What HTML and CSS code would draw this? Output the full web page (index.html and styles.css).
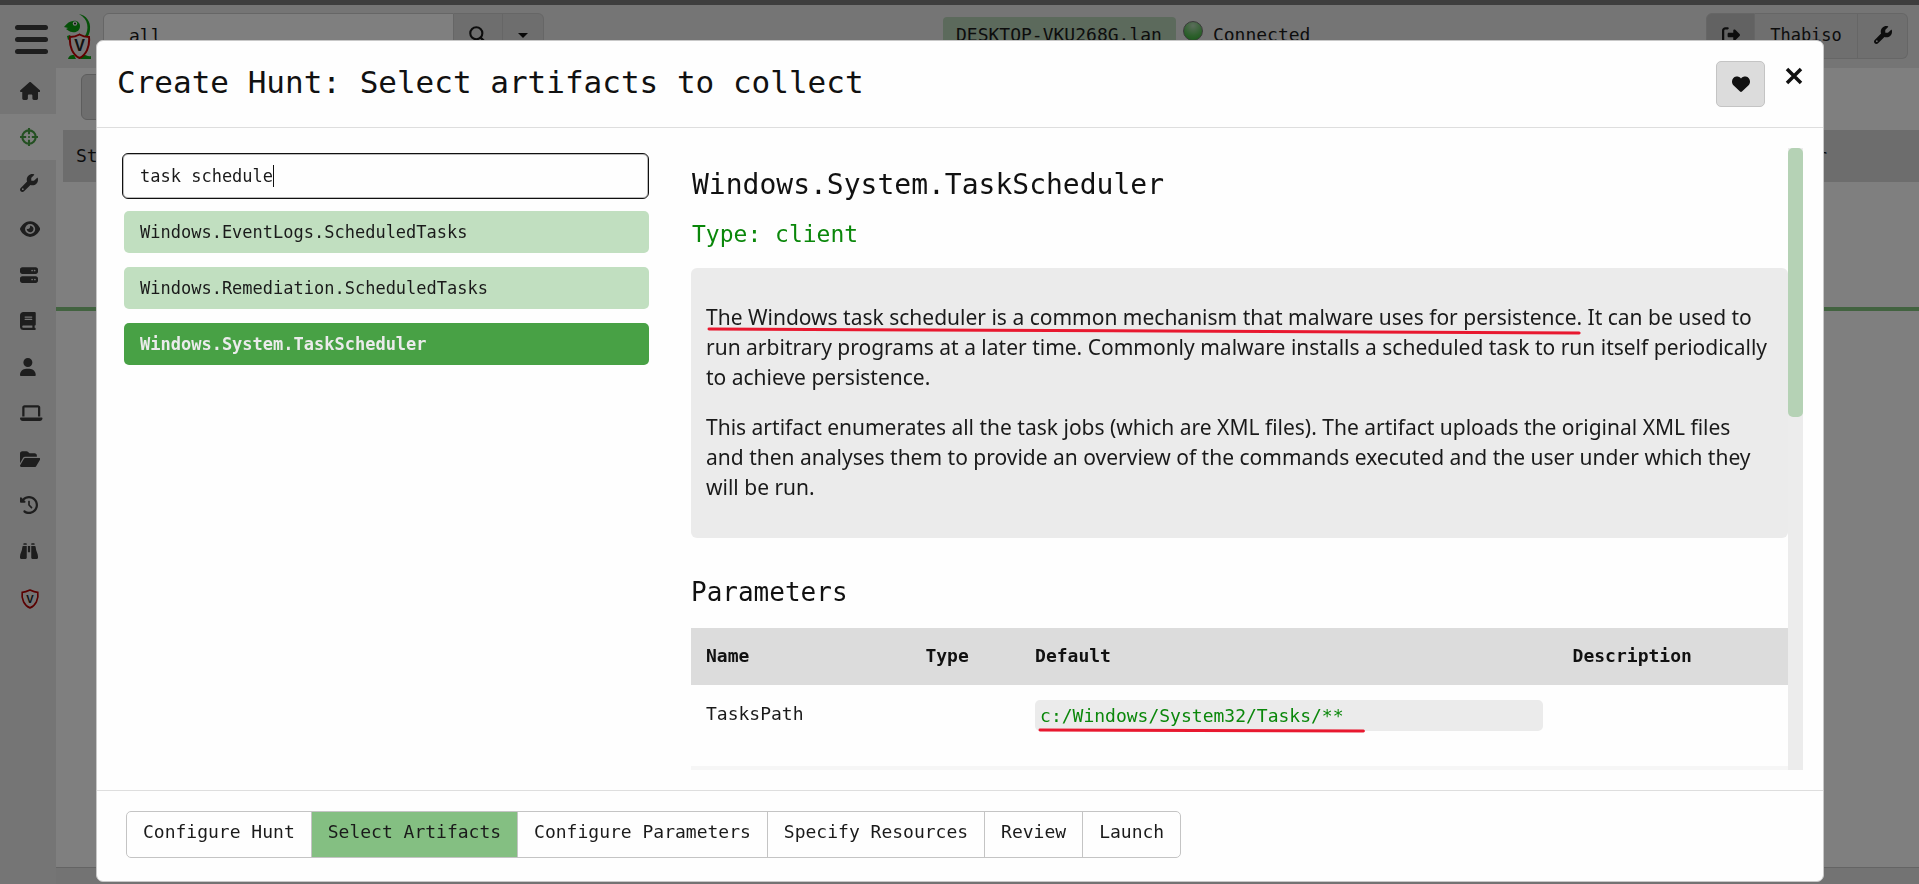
FILE: index.html
```html
<!DOCTYPE html>
<html lang="en">
<head>
<meta charset="utf-8">
<meta name="viewport" content="width=device-width, initial-scale=1">
<title>Create Hunt</title>
<link rel="stylesheet" href="styles.css">
</head>
<body>
<div class="app">
  <header class="topbar">
    <button class="menu-button" type="button" aria-label="Menu"><span></span><span></span><span></span></button>
    <svg class="logo" viewBox="0 0 28 46" aria-hidden="true">
      <path d="M15 1C22 2 27 9 26 16C26 20 24 24 22 25L21 23C25 17 25 6 15 1Z" fill="#0aa010"/>
      <path d="M0 14C3 10 6 8 9 8C12 7 16 9 16 13C16 18 12 20 8 19C6 19 4 17 2 16L4 15Z" fill="#0aa010"/>
      <path d="M3 23L6 22L8 25L4 27Z" fill="#0aa010"/>
      <path d="M4 46C5 42 8 42 10 42L12 46ZM16 46L18 42C22 41 23 44 27 43L27 46Z" fill="#0aa010"/>
      <circle cx="11" cy="10.500" r="2.200" fill="#fff"/><circle cx="11" cy="10.500" r="1" fill="#111"/>
      <path d="M15.500 21.500C18 23 21 24 25 24C26 34 22 42 15.500 45C9 42 5 34 6 24C10 24 13 23 15.500 21.500Z" fill="#ececec" stroke="#c00000" stroke-width="2"/>
      <text x="15.500" y="38" text-anchor="middle" class="logo-letter">V</text>
    </svg>
    <div class="search">
      <input type="text" value="all" aria-label="Search clients">
      <button type="button" aria-label="Search"><svg class="icon" viewBox="0 0 512 512"><circle cx="208" cy="208" r="172" fill="none" stroke="currentColor" stroke-width="60"/><path d="M330 330L480 480" stroke="currentColor" stroke-width="64" stroke-linecap="round"/></svg></button>
      <button class="narrow" type="button" aria-label="Search options"><span class="caret-down"></span></button>
    </div>
    <div class="client"><span class="client-name">DESKTOP-VKU268G.lan</span><span class="status-dot"></span><span>Connected</span></div>
    <div class="user">
      <button class="logout" type="button" aria-label="Log out"><svg class="icon" viewBox="0 0 512 512"><path d="M377.900 105.900L500.700 228.700c7.200 7.200 11.300 17.100 11.300 27.300s-4.100 20.100-11.300 27.300L377.900 406.100c-6.400 6.400-15 9.900-24 9.900c-18.700 0-33.900-15.200-33.900-33.900l0-62.100-128 0c-17.700 0-32-14.300-32-32l0-64c0-17.700 14.300-32 32-32l128 0 0-62.100c0-18.700 15.200-33.900 33.900-33.900c9 0 17.600 3.600 24 9.900zM160 96L96 96c-17.700 0-32 14.300-32 32l0 256c0 17.700 14.300 32 32 32l64 0c17.700 0 32 14.300 32 32s-14.300 32-32 32l-64 0c-53 0-96-43-96-96L0 128C0 75 43 32 96 32l64 0c17.700 0 32 14.300 32 32s-14.300 32-32 32z"/></svg></button>
      <button type="button">Thabiso</button>
      <button type="button" aria-label="Settings"><svg class="icon" viewBox="0 0 512 512"><use href="#wrench"/></svg></button>
    </div>
  </header>
  <div class="workspace">
    <nav class="sidebar" aria-label="Main">
      <a href="#" aria-label="Home"><svg class="icon" viewBox="0 0 576 512"><path d="M575.800 255.500c0 18-15 32.100-32 32.100h-32l.7 160.200c0 2.700-.2 5.400-.5 8.100V472c0 22.100-17.900 40-40 40H392c-22.100 0-40-17.900-40-40V384c0-17.700-14.300-32-32-32H256c-17.700 0-32 14.300-32 32v88c0 22.100-17.900 40-40 40H104c-22.100 0-40-17.900-40-40V287.600H32c-18 0-32-14-32-32.100c0-9 3-17 10-24L266.400 8c7-7 15-8 22-8s15 2 21 7L564.800 231.500c8 7 12 15 11 24z"/></svg></a>
      <a href="#" class="active" aria-label="Hunts"><svg class="icon" viewBox="0 0 512 512"><circle cx="256" cy="256" r="190" fill="none" stroke="currentColor" stroke-width="60"/><path d="M256 0V176M256 336V512M0 256H176M336 256H512" stroke="currentColor" stroke-width="60"/><circle cx="256" cy="256" r="30"/></svg></a>
      <a href="#" aria-label="Artifacts"><svg class="icon" viewBox="0 0 512 512"><path id="wrench" d="M352 320c88.400 0 160-71.600 160-160c0-15.300-2.200-30.100-6.200-44.200c-3.100-10.800-16.400-13.200-24.300-5.300l-76.800 76.800c-3 3-7.100 4.700-11.300 4.700H336c-8.800 0-16-7.200-16-16V118.600c0-4.200 1.700-8.300 4.700-11.300l76.800-76.800c7.900-7.900 5.400-21.200-5.300-24.300C382.100 2.200 367.300 0 352 0C263.600 0 192 71.600 192 160c0 19.100 3.400 37.500 9.500 54.500L19.900 396.100C7.200 408.800 0 426.100 0 444.100C0 481.600 30.400 512 67.900 512c18 0 35.300-7.200 48-19.900L297.500 310.500c17 6.200 35.400 9.500 54.500 9.500zM80 408a24 24 0 1 1 0 48 24 24 0 1 1 0-48z"/></svg></a>
      <a href="#" aria-label="Events"><svg class="icon" viewBox="0 0 576 512"><path d="M288 32c-80.800 0-145.500 36.800-192.600 80.600C48.600 156 17.300 208 2.500 243.700c-3.300 7.900-3.300 16.700 0 24.600C17.300 304 48.600 356 95.400 399.400C142.500 443.200 207.200 480 288 480s145.500-36.800 192.600-80.600c46.800-43.500 78.100-95.400 93-131.100c3.300-7.900 3.300-16.700 0-24.600c-14.900-35.700-46.200-87.700-93-131.100C433.500 68.800 368.800 32 288 32zM144 256a144 144 0 1 1 288 0 144 144 0 1 1 -288 0zm144-64c0 35.300-28.700 64-64 64c-7.100 0-13.900-1.200-20.300-3.300c-5.500-1.800-11.900 1.600-11.700 7.400c.3 6.900 1.300 13.800 3.200 20.700c13.700 51.200 66.400 81.600 117.600 67.900s81.600-66.400 67.900-117.600c-11.100-41.500-47.800-69.400-88.600-71.100c-5.800-.2-9.200 6.100-7.400 11.700c2.100 6.400 3.300 13.200 3.300 20.300z"/></svg></a>
      <a href="#" aria-label="Server"><svg class="icon" viewBox="0 0 512 512"><path d="M64 32C28.700 32 0 60.700 0 96v64c0 35.300 28.700 64 64 64H448c35.300 0 64-28.700 64-64V96c0-35.300-28.700-64-64-64H64zm280 72a24 24 0 1 1 0 48 24 24 0 1 1 0-48zm48 24a24 24 0 1 1 48 0 24 24 0 1 1 -48 0zM64 288c-35.300 0-64 28.700-64 64v64c0 35.300 28.700 64 64 64H448c35.300 0 64-28.700 64-64V352c0-35.300-28.700-64-64-64H64zm280 72a24 24 0 1 1 0 48 24 24 0 1 1 0-48zm56 24a24 24 0 1 1 48 0 24 24 0 1 1 -48 0z"/></svg></a>
      <a href="#" aria-label="Notebooks"><svg class="icon" viewBox="0 0 448 512"><path d="M96 0C43 0 0 43 0 96V416c0 53 43 96 96 96H416c17.700 0 32-14.300 32-32s-14.300-32-32-32V384c17.700 0 32-14.300 32-32V32c0-17.700-14.300-32-32-32H96zm0 384H352v64H96c-17.700 0-32-14.300-32-32s14.300-32 32-32zm32-240c0-8.800 7.200-16 16-16H336c8.800 0 16 7.200 16 16s-7.200 16-16 16H144c-8.800 0-16-7.200-16-16zm16 48H336c8.800 0 16 7.200 16 16s-7.200 16-16 16H144c-8.800 0-16-7.200-16-16s7.200-16 16-16z"/></svg></a>
      <a href="#" aria-label="Users"><svg class="icon" viewBox="0 0 448 512"><path d="M224 256A128 128 0 1 0 224 0a128 128 0 1 0 0 256zm-45.700 48C79.800 304 0 383.800 0 482.300C0 498.700 13.300 512 29.700 512H418.300c16.400 0 29.700-13.300 29.700-29.700C448 383.800 368.200 304 269.700 304H178.300z"/></svg></a>
      <a href="#" aria-label="Host"><svg class="icon" viewBox="0 0 640 512"><path d="M128 32C92.700 32 64 60.700 64 96V352h64V96H512V352h64V96c0-35.300-28.700-64-64-64H128zM19.200 384C8.600 384 0 392.600 0 403.200C0 445.600 34.400 480 76.800 480H563.200c42.400 0 76.800-34.400 76.800-76.800c0-10.600-8.600-19.200-19.200-19.200H19.200z"/></svg></a>
      <a href="#" aria-label="Files"><svg class="icon" viewBox="0 0 576 512"><path d="M88.700 223.800L0 375.800V96C0 60.700 28.700 32 64 32H181.500c17 0 33.300 6.700 45.300 18.700l26.500 26.500c12 12 28.300 18.700 45.300 18.700H416c35.300 0 64 28.700 64 64v32H144c-22.800 0-43.800 12.100-55.300 31.800zm27.600 16.100C122.100 230 132.600 224 144 224H544c11.500 0 22 6.100 27.700 16.100s5.700 22.200-.1 32.100l-112 192C453.900 474 443.400 480 432 480H32c-11.500 0-22-6.100-27.700-16.100s-5.700-22.200 .1-32.100l112-192z"/></svg></a>
      <a href="#" aria-label="History"><svg class="icon" viewBox="0 0 512 512"><path d="M75 75L41 41C25.900 25.900 0 36.600 0 57.900V168c0 13.300 10.700 24 24 24H134.100c21.400 0 32.100-25.900 17-41l-30.800-30.800C155 85.500 203 64 256 64c106 0 192 86 192 192s-86 192-192 192c-40.800 0-78.600-12.700-109.700-34.400c-14.500-10.100-34.400-6.600-44.600 7.900s-6.600 34.400 7.900 44.600C151.200 495 201.700 512 256 512c141.400 0 256-114.600 256-256S397.400 0 256 0C185.300 0 121.300 28.700 75 75zm181 53c-13.300 0-24 10.700-24 24V256c0 6.400 2.500 12.500 7 17l72 72c9.400 9.400 24.600 9.400 33.900 0s9.400-24.600 0-33.900l-65-65V152c0-13.300-10.700-24-24-24z"/></svg></a>
      <a href="#" aria-label="Client events"><svg class="icon" viewBox="0 0 512 512"><path d="M112 32h64c9 0 16 7 16 16v32H96V48c0-9 7-16 16-16zM336 32h64c9 0 16 7 16 16v32h-96V48c0-9 7-16 16-16zM90 112H192V448c0 18-14 32-32 32H32c-18 0-32-14-32-32V410C0 330 60 260 66 150C67 128 76 112 90 112zM320 112H422C436 112 445 128 446 150C452 260 512 330 512 410V448c0 18-14 32-32 32H352c-18 0-32-14-32-32zM224 112h64v176h-64z"/></svg></a>
      <a href="#" class="about" aria-label="Velociraptor"><svg class="icon" viewBox="0 0 18 18"><path d="M9 1C11 2 13 3 16 3C17 9 14 15 9 17C4 15 1 9 2 3C5 3 7 2 9 1Z" fill="none" stroke="#b40000" stroke-width="1.500"/><text x="9" y="12.500" text-anchor="middle" class="badge-letter">V</text></svg></a>
    </nav>
    <main class="hunts">
      <div class="toolbar"><button type="button" aria-label="New hunt"></button></div>
      <div class="hunt-columns"><span>State</span><span>Creator</span></div>
      <div class="hunt-rows"></div>
      <div class="splitter"></div>
      <div class="hunt-detail"></div>
      <div class="statusbar"></div>
    </main>
  </div>
</div>

<div class="backdrop">
  <section class="modal" role="dialog" aria-labelledby="dialog-title">
    <header class="modal-header">
      <h1 id="dialog-title">Create Hunt: Select artifacts to collect</h1>
      <button class="favorite" type="button" aria-label="Favorites"><svg class="icon" viewBox="0 0 512 512"><path d="M47.600 300.400L228.300 469.100c7.500 7 17.400 10.900 27.700 10.900s20.200-3.900 27.700-10.900L464.400 300.400c30.400-28.300 47.600-68 47.600-109.500v-5.800c0-69.900-50.500-129.500-119.400-141C347 36.500 300.600 51.400 268 84L256 96 244 84c-32.600-32.600-79-47.500-124.600-39.900C50.500 55.600 0 115.200 0 185.100v5.800c0 41.500 17.200 81.200 47.600 109.500z"/></svg></button>
      <button class="close" type="button" aria-label="Close"><svg viewBox="0 0 16 16"><path d="M1 1L15 15M15 1L1 15" stroke="#111" stroke-width="3.500"/></svg></button>
    </header>
    <div class="modal-body">
      <div class="picker">
        <div class="filter"><input type="text" value="task schedule" aria-label="Search for artifacts"><span class="text-caret"></span></div>
        <div class="results">
          <button type="button">Windows.EventLogs.ScheduledTasks</button>
          <button type="button">Windows.Remediation.ScheduledTasks</button>
          <button type="button" class="selected">Windows.System.TaskScheduler</button>
        </div>
      </div>
      <div class="detail">
        <article class="artifact">
          <h2>Windows.System.TaskScheduler</h2>
          <h3 class="type">Type: client</h3>
          <div class="description">
            <p><span class="marked">The Windows task scheduler is a common mechanism that malware uses for persistence.<svg class="marker" viewBox="0 0 870 8" preserveAspectRatio="none"><path d="M3 2L867 6" /></svg></span> It can be used to run arbitrary programs at a later time. Commonly malware installs a scheduled task to run itself periodically to achieve persistence.</p>
            <p>This artifact enumerates all the task jobs (which are XML files). The artifact uploads the original XML files and then analyses them to provide an overview of the commands executed and the user under which they will be run.</p>
          </div>
          <h3 class="section">Parameters</h3>
          <table>
            <thead><tr><th class="c-name">Name</th><th class="c-type">Type</th><th class="c-default">Default</th><th class="c-desc">Description</th></tr></thead>
            <tbody>
              <tr><td>TasksPath</td><td></td><td><code><span class="marked">c:/Windows/System32/Tasks/**<svg class="marker" viewBox="0 0 326 6" preserveAspectRatio="none"><path d="M0 3L326 4"/></svg></span></code></td><td></td></tr>
              <tr class="striped"><td></td><td></td><td></td><td></td></tr>
            </tbody>
          </table>
        </article>
        <div class="scroll-track"><div class="scroll-thumb"></div></div>
      </div>
    </div>
    <footer class="modal-footer">
      <div class="steps">
        <button type="button">Configure Hunt</button>
        <button type="button" class="current">Select Artifacts</button>
        <button type="button">Configure Parameters</button>
        <button type="button">Specify Resources</button>
        <button type="button">Review</button>
        <button type="button">Launch</button>
      </div>
    </footer>
  </section>
</div>
</body>
</html>
```

FILE: styles.css
```css
* { box-sizing: border-box; }
body {
  margin: 0;
  color: #1a1a1a;
  background: #fff;
  font: 18px/27px "DejaVu Sans Mono", "Liberation Mono", monospace;
}
button, input { font: inherit; color: inherit; margin: 0; }
button { padding: 0; border: 0; background: none; }
h1, h2, h3, p { margin: 0; font-weight: normal; }
.icon { display: block; height: 18px; width: auto; fill: currentColor; }

/* Page behind the dialog */
.app { display: flex; flex-direction: column; height: 100vh; overflow: hidden; }
.topbar {
  display: flex;
  align-items: flex-start;
  height: 68px;
  padding: 8px 11px 0 15px;
  border-top: 5px solid #7c7c7c;
  background: #ebebeb;
}
.menu-button { display: flex; flex-direction: column; gap: 7px; width: 33px; margin: 12px 16px 0 0; }
.menu-button span { height: 5px; border-radius: 3px; background: #3c3c3c; }
.logo { width: 28px; height: 46px; margin-right: 11px; }
.logo-letter { font: bold 16px "Liberation Sans", sans-serif; fill: #222; }
.search, .user { display: flex; height: 46px; }
.search { width: 441px; }
.search input {
  flex: 1;
  min-width: 0;
  padding: 0 25px 2px;
  border: 1px solid #ccc;
  border-radius: 6px 0 0 6px;
  background: #fff;
}
.search button, .user button {
  display: flex;
  align-items: center;
  justify-content: center;
  width: 49px;
  padding-bottom: 2px;
  border: 1px solid #ccc;
  border-left: 0;
  background: #dcdcdc;
}
.search .narrow { width: 41px; border-radius: 0 6px 6px 0; }
.caret-down { border: 5px solid transparent; border-top-color: #111; border-bottom: 0; }
.client { display: flex; align-items: flex-start; margin-left: 399px; line-height: 36px; }
.client-name { margin-top: 4px; padding: 0 14px 0 13px; height: 36px; border-radius: 4px; background: #b9d4b8; }
.status-dot {
  width: 20px;
  height: 20px;
  margin: 8px 10px 0 7px;
  border: 1px solid #777;
  border-radius: 50%;
  background: radial-gradient(circle at 50% 20%, #b8dab8, #5cc05a 60%, #2fae2d);
}
.client span:last-child { margin-top: 4px; }
.user { margin-left: auto; }
.user button { background: #dedede; width: 50px; }
.user button:nth-child(2) { width: 103px; font-size: 17px; }
.user button:last-child { border-radius: 0 6px 6px 0; }
.user .logout { width: 49px; background: #c4c4c4; border-left: 1px solid #ccc; border-radius: 6px 0 0 6px; }
.workspace { display: flex; flex: 1; min-height: 0; }
.sidebar { width: 56px; background: #ebebeb; color: #3c3c3c; }
.sidebar a { display: flex; align-items: center; height: 46px; padding-left: 20px; color: inherit; }
.sidebar .active { background: #fff; color: #48a145; }
.sidebar .about .icon { height: 20px; margin-top: 4px; }
.badge-letter { font: bold 10px "Liberation Sans", sans-serif; fill: #222; }
.hunts { display: flex; flex: 1; flex-direction: column; }
.toolbar { height: 62px; padding: 6px 25px; }
.toolbar button { width: 60px; height: 46px; border: 1px solid #bbb; border-radius: 6px; background: #dcdcdc; }
.hunt-columns {
  display: flex;
  justify-content: space-between;
  margin-left: 7px;
  padding: 12px 92px 13px 13px;
  background: #dadada;
}
.hunt-rows { height: 125px; }
.splitter { height: 4px; background: #84c680; }
.hunt-detail { flex: 1; }
.statusbar { height: 17px; border-top: 1px solid #c8c8c8; background: #e6e6e6; }

/* Dialog */
.backdrop {
  position: fixed;
  inset: 0;
  display: flex;
  padding: 40px 95px 2px 96px;
  background: rgba(0, 0, 0, 0.5);
}
.modal {
  display: flex;
  flex: 1;
  flex-direction: column;
  min-width: 0;
  border: 1px solid #c8c8c8;
  border-radius: 7px;
  background: #fefefe;
}
.modal-header { display: flex; align-items: flex-start; padding: 20px 21px 20px 20px; border-bottom: 1px solid #dedede; }
.modal-header h1 { flex: 1; font-size: 31px; line-height: 43px; color: #111; }
.favorite {
  display: grid;
  place-items: center;
  width: 49px;
  height: 46px;
  border: 1px solid #c4c4c4;
  border-radius: 5px;
  background: #dcdcdc;
  color: #111;
}
.close { width: 16px; height: 16px; margin: 7px 0 0 21px; }
.close svg { display: block; overflow: visible; }
.modal-body {
  display: grid;
  grid-template-columns: minmax(0, 527fr) minmax(0, 1112fr);
  gap: 42px;
  flex: 1;
  min-height: 0;
  padding: 20px 20px 20px 25px;
}
.picker { padding-top: 5px; font-size: 17px; }
.filter { position: relative; }
.filter input {
  display: block;
  width: 100%;
  height: 46px;
  padding: 0 17px;
  border: 1px solid #111;
  border-radius: 6px;
  background: #fefefe;
  box-shadow: inset 0 0 0 1px #bbb;
}
.text-caret { position: absolute; top: 12px; left: calc(18px + 13ch); width: 1px; height: 22px; background: #111; }
.results { display: flex; flex-direction: column; gap: 14px; margin: 12px 0 0 2px; }
.results button { height: 42px; padding: 0 16px; border-radius: 5px; background: #c1dfc0; text-align: left; }
.results .selected { background: #48a145; color: #ebebeb; font-weight: bold; }
.detail { display: flex; min-height: 0; }
.artifact { flex: 1; min-width: 0; overflow: hidden; padding-top: 17px; }
.artifact h2 { padding-left: 1px; font-size: 28px; line-height: 40px; color: #111; }
.artifact .type { margin: 14px 0 19px; padding-left: 1px; font-size: 23px; line-height: 30px; color: #0a870a; }
.description {
  display: flex;
  flex-direction: column;
  gap: 20px;
  padding: 34px 17px 36px 15px;
  border-radius: 6px;
  background: #ebebeb;
  font: 21px/30px "Noto Sans", sans-serif;
}
.marked { position: relative; }
.marker { position: absolute; left: 0; top: 24px; width: 100%; height: 8px; overflow: visible; }
.marker path { fill: none; stroke: #e8182f; stroke-width: 3; stroke-linecap: round; }
.section { margin: 38px 0 20px; font-size: 26px; line-height: 32px; color: #111; }
table { width: 100%; border-collapse: collapse; table-layout: fixed; }
th, td { padding: 15px; text-align: left; vertical-align: top; }
th { padding: 14px 15px 16px; background: #dcdcdc; color: #111; }
td { padding-bottom: 35px; }
.c-name { width: 20%; }
.c-type { width: 10%; }
.c-default { width: 49%; }
.c-desc { width: 21%; }
.striped { background: #f6f6f6; }
code { display: block; padding: 2px 5px; border-radius: 5px; background: #ebebeb; color: #0a870a; font: inherit; }
code .marker { top: 22px; width: calc(100% + 20px); height: 6px; }
.scroll-track { width: 15px; background: #ececec; }
.scroll-thumb { height: 44%; max-height: 269px; border-radius: 5px; background: #b5d2b5; }
.modal-footer { padding: 20px 29px 23px; border-top: 1px solid #dedede; }
.steps { display: inline-flex; vertical-align: top; border: 1px solid #c4c4c4; border-radius: 5px; overflow: hidden; }
.steps button { padding: 6px 16px 12px; border-right: 1px solid #c4c4c4; }
.steps button:last-child { border-right: 0; }
.steps .current { background: #84bf82; }
```
